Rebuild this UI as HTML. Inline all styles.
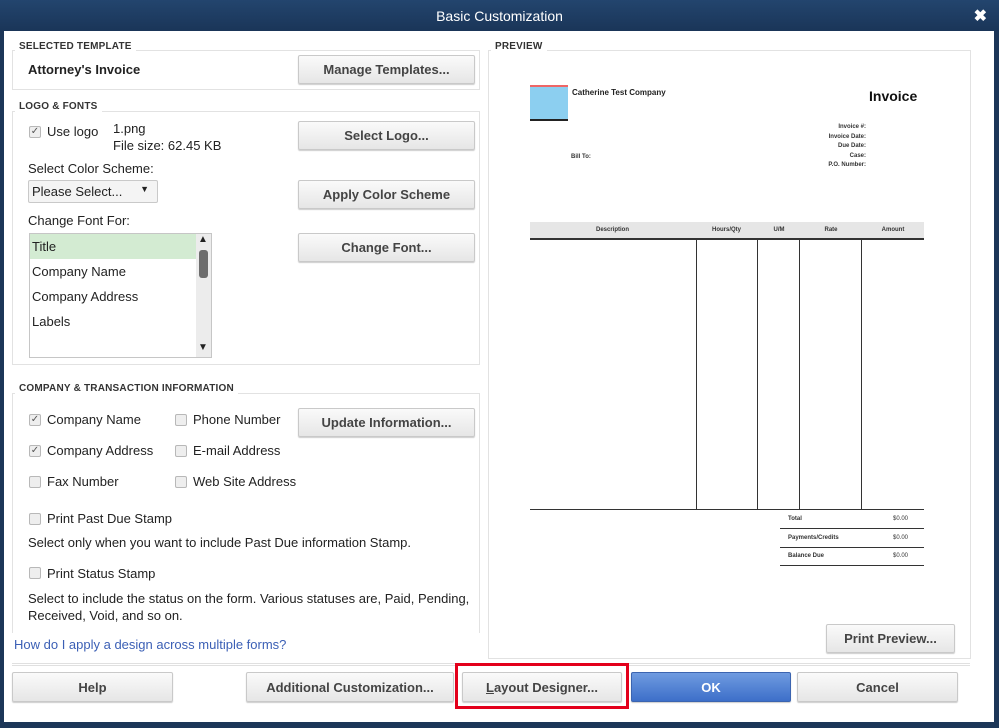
<!DOCTYPE html><html><head><style>
*{margin:0;padding:0;box-sizing:border-box}
body{width:999px;height:728px;background:#1c3658;font-family:"Liberation Sans",Arial,sans-serif;font-size:13px;color:#222;position:relative;overflow:hidden}
.a{position:absolute}
#tb{left:0;top:0;width:999px;height:31px;background:linear-gradient(#23456e,#1a3558);color:#fff;font-size:14px;text-align:center;line-height:33px}
#cl{right:12px;top:6px;color:#fff;font-weight:bold;font-size:16px}
#bd{left:4px;top:31px;width:990px;height:691px;background:#fff}
.g{border:1px solid #e2e2e2}
.gt{font-size:10px;font-weight:bold;color:#333;background:#fff;padding:0 4px;letter-spacing:.2px}
.btn{border:1px solid #c9c9c9;border-radius:2px;background:linear-gradient(#fafafa,#e6e6e6);text-align:center;font-weight:bold;color:#444;font-size:13px;box-shadow:0 1px 1px #ccc}
.cb{width:12px;height:12px;border:1px solid #b8b8b8;background:#eee;border-radius:2px;font-size:10px;line-height:10px;text-align:center;color:#555}
.p{font-size:6px;font-weight:bold;color:#333}
</style></head><body>
<div id="tb" class="a">Basic Customization</div><div id="cl" class="a">✖</div>
<div id="bd" class="a"></div>

<div class="a g" style="left:12px;top:50px;width:468px;height:40px"></div>
<div class="a gt" style="left:15px;top:41px">SELECTED TEMPLATE</div>
<div class="a" style="left:28px;top:62px;font-weight:bold;font-size:13px">Attorney's Invoice</div>
<div class="a btn" style="left:298px;top:55px;width:177px;height:29px;line-height:28px">Manage Templates...</div>

<div class="a g" style="left:12px;top:111px;width:468px;height:254px"></div>
<div class="a gt" style="left:15px;top:101px">LOGO &amp; FONTS</div>
<div class="a cb" style="left:29px;top:126px">✓</div>
<div class="a" style="left:47px;top:124px">Use logo</div>
<div class="a" style="left:113px;top:121px">1.png</div>
<div class="a" style="left:113px;top:138px">File size: 62.45 KB</div>
<div class="a btn" style="left:298px;top:121px;width:177px;height:29px;line-height:28px">Select Logo...</div>
<div class="a" style="left:28px;top:161px">Select Color Scheme:</div>
<div class="a" style="left:28px;top:180px;width:130px;height:23px;border:1px solid #c9c9c9;border-radius:2px;background:#f4f4f4;padding:3px 3px;font-size:13px">Please Select...<span style="position:absolute;right:8px;top:3px;font-size:9px">▼</span></div>
<div class="a btn" style="left:298px;top:180px;width:177px;height:29px;line-height:28px">Apply Color Scheme</div>
<div class="a" style="left:28px;top:213px">Change Font For:</div>
<div class="a" style="left:29px;top:233px;width:183px;height:125px;border:1px solid #c6c6c6"></div>
<div class="a" style="left:30px;top:234px;width:166px;height:25px;background:#d3ebd2"></div>
<div class="a" style="left:196px;top:234px;width:15px;height:123px;background:#ececec"></div>
<div class="a" style="left:199px;top:250px;width:9px;height:28px;background:#6d6d6d;border-radius:3px"></div>
<div class="a" style="left:198px;top:234px;font-size:10px">▲</div>
<div class="a" style="left:198px;top:342px;font-size:10px">▼</div>
<div class="a" style="left:32px;top:239px">Title</div>
<div class="a" style="left:32px;top:264px">Company Name</div>
<div class="a" style="left:32px;top:289px">Company Address</div>
<div class="a" style="left:32px;top:314px">Labels</div>
<div class="a btn" style="left:298px;top:233px;width:177px;height:29px;line-height:28px">Change Font...</div>

<div class="a g" style="left:12px;top:393px;width:468px;height:240px;border-bottom:none"></div>
<div class="a gt" style="left:15px;top:383px">COMPANY &amp; TRANSACTION INFORMATION</div>
<div class="a cb" style="left:29px;top:414px">✓</div><div class="a" style="left:47px;top:412px">Company Name</div>
<div class="a cb" style="left:175px;top:414px"></div><div class="a" style="left:193px;top:412px">Phone Number</div>
<div class="a cb" style="left:29px;top:445px">✓</div><div class="a" style="left:47px;top:443px">Company Address</div>
<div class="a cb" style="left:175px;top:445px"></div><div class="a" style="left:193px;top:443px">E-mail Address</div>
<div class="a cb" style="left:29px;top:476px"></div><div class="a" style="left:47px;top:474px">Fax Number</div>
<div class="a cb" style="left:175px;top:476px"></div><div class="a" style="left:193px;top:474px">Web Site Address</div>
<div class="a btn" style="left:298px;top:408px;width:177px;height:29px;line-height:28px">Update Information...</div>
<div class="a cb" style="left:29px;top:513px"></div><div class="a" style="left:47px;top:511px">Print Past Due Stamp</div>
<div class="a" style="left:28px;top:535px">Select only when you want to include Past Due information Stamp.</div>
<div class="a cb" style="left:29px;top:567px"></div><div class="a" style="left:47px;top:566px">Print Status Stamp</div>
<div class="a" style="left:28px;top:590px;width:452px;line-height:17px">Select to include the status on the form. Various statuses are, Paid, Pending, Received, Void, and so on.</div>
<div class="a" style="left:14px;top:637px;color:#3b5fb5">How do I apply a design across multiple forms?</div>

<div class="a g" style="left:488px;top:50px;width:483px;height:609px"></div>
<div class="a gt" style="left:491px;top:41px">PREVIEW</div>
<div class="a" style="left:530px;top:85px;width:38px;height:36px;background:#8ccff0;border-top:2px solid #e66;border-bottom:2px solid #222"></div>
<div class="a" style="left:572px;top:88px;font-size:8px;font-weight:bold">Catherine Test Company</div>
<div class="a" style="left:869px;top:88px;font-size:14px;font-weight:bold;color:#111">Invoice</div>
<div class="a p" style="left:780px;top:123px;width:86px;text-align:right;line-height:9.5px">Invoice #:<br>Invoice Date:<br>Due Date:<br>Case:<br>P.O. Number:</div>
<div class="a p" style="left:571px;top:154px">Bill To:</div>
<div class="a" style="left:530px;top:222px;width:394px;height:16px;background:#e6e6e6"></div>
<div class="a p" style="left:530px;top:227px;width:165px;text-align:center">Description</div>
<div class="a p" style="left:695px;top:227px;width:63px;text-align:center">Hours/Qty</div>
<div class="a p" style="left:758px;top:227px;width:42px;text-align:center">U/M</div>
<div class="a p" style="left:800px;top:227px;width:62px;text-align:center">Rate</div>
<div class="a p" style="left:862px;top:227px;width:62px;text-align:center">Amount</div>
<div class="a" style="left:530px;top:238px;width:394px;height:2px;background:#333"></div>
<div class="a" style="left:696px;top:238px;width:1px;height:272px;background:#333"></div>
<div class="a" style="left:757px;top:238px;width:1px;height:272px;background:#333"></div>
<div class="a" style="left:799px;top:238px;width:1px;height:272px;background:#333"></div>
<div class="a" style="left:861px;top:238px;width:1px;height:272px;background:#333"></div>
<div class="a" style="left:530px;top:509px;width:394px;height:1px;background:#333"></div>
<div class="a" style="left:780px;top:528px;width:144px;height:1px;background:#333"></div>
<div class="a" style="left:780px;top:547px;width:144px;height:1px;background:#333"></div>
<div class="a" style="left:780px;top:565px;width:144px;height:1px;background:#333"></div>
<div class="a p" style="left:788px;top:516px">Total</div><div class="a p" style="left:893px;top:516px;font-weight:normal">$0.00</div>
<div class="a p" style="left:788px;top:535px">Payments/Credits</div><div class="a p" style="left:893px;top:535px;font-weight:normal">$0.00</div>
<div class="a p" style="left:788px;top:553px">Balance Due</div><div class="a p" style="left:893px;top:553px;font-weight:normal">$0.00</div>
<div class="a btn" style="left:826px;top:624px;width:129px;height:29px;line-height:28px">Print Preview...</div>

<div class="a" style="left:12px;top:663px;width:958px;height:3px;border-top:1px solid #e0e0e0;border-bottom:1px solid #e0e0e0"></div>
<div class="a btn" style="left:12px;top:672px;width:161px;height:30px;line-height:29px">Help</div>
<div class="a btn" style="left:246px;top:672px;width:208px;height:30px;line-height:29px">Additional Customization...</div>
<div class="a" style="left:455px;top:663px;width:174px;height:46px;border:3px solid #e3001b"></div>
<div class="a btn" style="left:462px;top:672px;width:160px;height:30px;line-height:29px"><u>L</u>ayout Designer...</div>
<div class="a btn" style="left:631px;top:672px;width:160px;height:30px;line-height:29px;background:linear-gradient(#6f9be0,#3d6fc9);color:#fff;border-color:#3b64b0">OK</div>
<div class="a btn" style="left:797px;top:672px;width:161px;height:30px;line-height:29px">Cancel</div>
</body></html>
